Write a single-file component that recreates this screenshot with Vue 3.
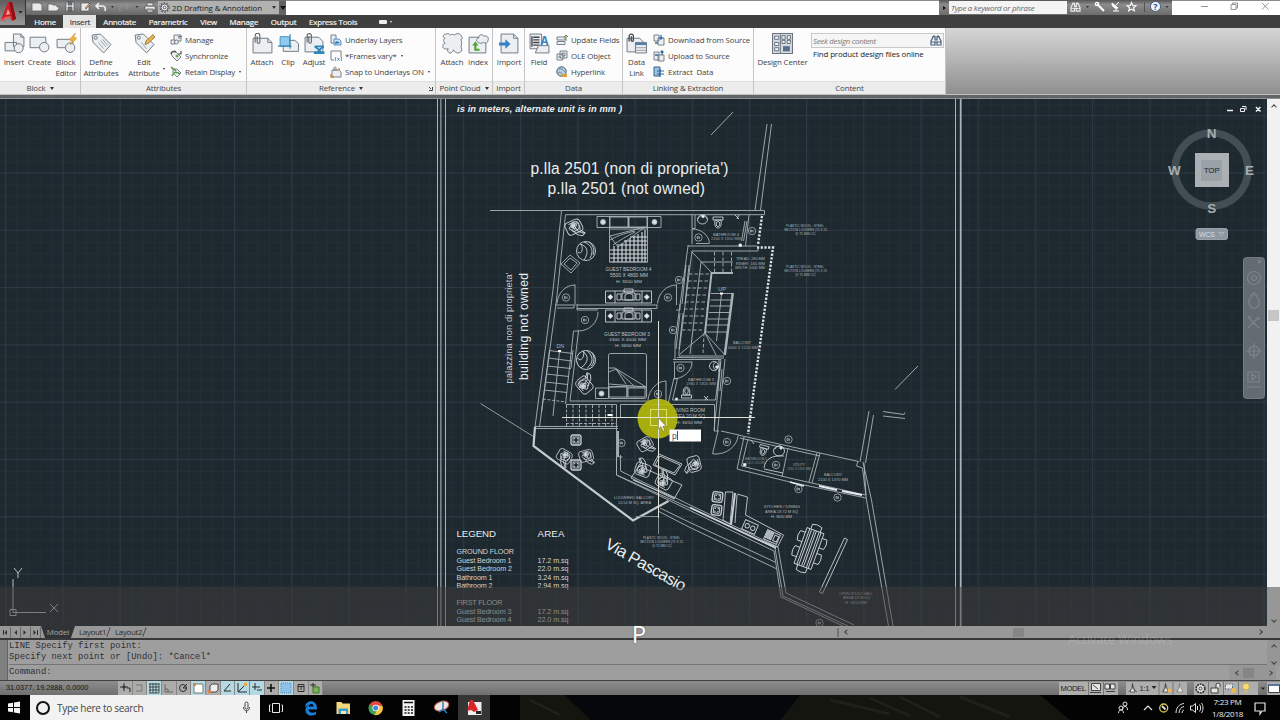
<template>
  <div class="window">
    <svg class="symbols" width="0" height="0">
      <symbol id="i-insert" viewBox="0 0 20 20"><path d="M9 1h7l3 3v9H9z M1 9h11v8H1z" class="pg" /><circle cx="14" cy="14.5" r="4.3" class="pg" /><path d="M16 1v3h3" class="ln" /></symbol>
      <symbol id="i-create" viewBox="0 0 20 20"><path d="M1 4h15v10H1z" class="pg" /><circle cx="14.500" cy="13.500" r="4.500" class="pg" /></symbol>
      <symbol id="i-beditor" viewBox="0 0 20 20"><path d="M1 6h15v8H1z" class="pg" /><circle cx="13.500" cy="14" r="4.500" class="pg" /><path d="M18.500 0l-6 6.500 3 1-2 4 6.300-6.500-3-1z" fill="#f2b03a" stroke="#c98518" stroke-width=".5" /></symbol>
      <symbol id="i-tag" viewBox="0 0 20 20"><path d="M1 2l8-1 10 10-7 8L2 9z" class="pg" /><circle cx="4.500" cy="4.500" r="1.500" class="ln" /><path d="M7 9l5 6M9 7l5 6M11 6l5 6" class="ln thin" /></symbol>
      <symbol id="i-tagedit" viewBox="0 0 20 20"><path d="M1 2l8-1 10 10-7 8L2 9z" class="pg" /><circle cx="4.500" cy="4.500" r="1.500" class="ln" /><path d="M10.500 11l1-3.500L18 1.500l2 2.300-6.300 6z" fill="#e9b351" stroke="#8a6521" stroke-width=".7" /><path d="M7 9l5 6" class="ln thin" /></symbol>
      <symbol id="i-attach" viewBox="0 0 20 20"><path d="M1 5h14l4 4v10H1z" class="pg" /><path d="M15 5v4h4" class="ln" /><path d="M3 9V2.500a2.200 2.200 0 0 1 4.500 0v6a1.300 1.300 0 0 1-2.600 0V3" fill="none" stroke="#5a6067" /></symbol>
      <symbol id="i-clip" viewBox="0 0 20 20"><path d="M5 7h11l3.500 3v7.500H5z" class="pg" /><path d="M2 3.500h9v9H2z" fill="#8fcbf0" stroke="#3c87b5" stroke-width=".8" /><path d="M0 12.500h13M11.500 1v14" stroke="#3c87b5" stroke-width="1.100" /></symbol>
      <symbol id="i-adjust" viewBox="0 0 20 20"><path d="M1 4h13l4 4v10H1z" class="pg" /><path d="M3 9V2.500a2 2 0 0 1 4 0v6a1.200 1.200 0 0 1-2.400 0V3" fill="none" stroke="#5a6067" /><path d="M10 12h9v2l-3 2v1.500h3.500V20h-10v-2.500H13V16l-3-2z" fill="#2f86b8" /><path d="M12.500 13.500h4l-2 1.500z" fill="#d9eef8" /></symbol>
      <symbol id="i-cloud" viewBox="0 0 20 20"><path d="M3 5C0 4 1 1 4 1c2-1 3 0 4 1 1-1 3-1 4 0 1-2 6-2 6.500 1C20 5 19 6 18 6c1 3 1 5 0 7 2 3 0 6-3 6-2 0-3-1-4-3-1 3-4 4-5 2-1-1-1-2 0-3-4 1-6-1-5-3 0-2 1-2 2-2-2-2-2-4 0-5z" class="pg" /></symbol>
      <symbol id="i-index" viewBox="0 0 20 20"><path d="M1 4h10v4h6v11H1z" class="pg" /><path d="M10 9c-3-1-2-4 0-4 0-4 4-4 5-2 4-1 5 2 4 4 0 3-3 3-4 2-2 1-4 1-5 0z" class="pg" /><path d="M4 12l3-4 3 4H8v3h3v2H6v-5z" fill="#4aa52e" /></symbol>
      <symbol id="i-import" viewBox="0 0 20 20"><path d="M2 1h12l4 4v14H2z" class="pg" /><path d="M14 1v4h4" class="ln" /><path d="M0 9h6V6l5 4.500L6 15v-3H0z" fill="#3381c7" /></symbol>
      <symbol id="i-field" viewBox="0 0 20 20"><path d="M1 1h11v14H1z" class="pg" /><path d="M4 4h6M4 6.500h6M4 9h6M4 11.500h6M2.800 3v10" stroke="#3e444b" stroke-width="1.300" /><path d="M6 19l3-7h10v7z" class="pg" /><text x="11" y="11.500" font-size="11" font-weight="bold" fill="#3781c4">A</text></symbol>
      <symbol id="i-datalink" viewBox="0 0 20 20"><path d="M1 5h12l4 4v9H1z" class="pg" /><path d="M3 8V3a2 2 0 0 1 4 0v4a1 1 0 0 1-2 0V3" fill="none" stroke="#3d4147" stroke-width="1.200" /><path d="M9 9h10.500v10H9z" class="pg" /><path d="M9 10.500h10.500" stroke="#4f7fae" stroke-width="2" /><path d="M9 14h10M9 16.500h10" class="ln thin" /></symbol>
      <symbol id="i-center" viewBox="0 0 20 20"><path d="M.5.500h19v19H.5z" fill="#d7dbdf" stroke="#6b747d" /><path d="M2.500 3h4v3h-4zM2.500 9h4v3h-4zM2.500 14h4v3h-4z M9.500 2.500h3v3.500h-3zM14.500 2.500h3v3.500h-3zM9.500 7h3v3h-3zM14.500 7h3v3h-3z" fill="#eef3f7" stroke="#566372" stroke-width=".8" /><path d="M10.500 12.500h6.500v5h-6.500z" fill="#59708b" /><path d="M8 1v18" class="ln" /></symbol>

      <symbol id="s-manage" viewBox="0 0 12 12"><path d="M4 1h7v6H4z" class="pg" /><path d="M8 2.500h4M8 4h3" class="ln" /><path d="M1 6h4v4H1z" class="pg" /><circle cx="6.500" cy="8" r="2" class="pg" /></symbol>
      <symbol id="s-sync" viewBox="0 0 12 12"><path d="M1 2l5 0 5 5-4 4-5-5z" class="pg" /><path d="M1 4a3 3 0 0 1 5-2M11 1v3H8" fill="none" stroke="#4a5158" stroke-width="1.200" /><circle cx="7" cy="6" r="1.500" fill="#6aa84f" /></symbol>
      <symbol id="s-retain" viewBox="0 0 12 12"><path d="M3 3l4 0 4 4-4 4-4-4z" class="pg" /><path d="M1 1l5 4M2 10c2-5 5-4 8-2" fill="none" stroke="#5a9642" stroke-width="1.500" /></symbol>
      <symbol id="s-layers" viewBox="0 0 12 12"><path d="M1 1h5v8H1z" class="pg" /><path d="M4 5h5l2 2v4H4z" fill="#cfe5f5" stroke="#2f7cb3" stroke-width=".8" /><path d="M5 10c0-4 3-3 5-1z" fill="#2f7cb3" /></symbol>
      <symbol id="s-frames" viewBox="0 0 12 12"><path d="M1 1h10v6M1 1v9h3" class="ln" /><path d="M6 7c-1 1-1 3 0 4M11 7c1 1 1 3 0 4M7.500 8l2 2.500M9.500 8l-2 2.500" fill="none" stroke="#3381b7" stroke-width=".9" /></symbol>
      <symbol id="s-snap" viewBox="0 0 12 12"><path d="M2 4h7l2 2v5H2z" class="pg" /><path d="M4 5V2a1 1 0 0 1 2 0v3" class="ln" /><path d="M1 8v3h3M9 2v3" fill="none" stroke="#d38125" stroke-width="1.300" /></symbol>
      <symbol id="s-update" viewBox="0 0 12 12"><path d="M1 3h8v3H1zM1 7.500h8v3H1z" class="pg" /><path d="M8 3l2-2 2 2M10 1v6" fill="none" stroke="#6b7f3c" /></symbol>
      <symbol id="s-ole" viewBox="0 0 12 12"><path d="M1 4h6v6H1zM4 1h7v7H4z" class="pg" /><path d="M6 3h3v3H6zM2 7h3" class="ln" /></symbol>
      <symbol id="s-link" viewBox="0 0 12 12"><circle cx="5.500" cy="5.500" r="4.700" fill="#b5cfe0" stroke="#46586a" /><path d="M3 3c3-1 4 1 6 3M2 7c2-2 4 1 5 2" class="ln" /><path d="M6 8h5v3H6z" fill="#d9a13b" /></symbol>
      <symbol id="s-down" viewBox="0 0 12 12"><path d="M1 1h5v6H1zM5 4h6v7H5z" class="pg" /><path d="M8 1v4M6.500 3.500L8 5l1.500-1.500M2 9h3" fill="none" stroke="#2d6da8" stroke-width="1.300" /></symbol>
      <symbol id="s-up" viewBox="0 0 12 12"><path d="M1 2h5v8H1zM5 5h6v6H5z" class="pg" /><path d="M9 5V1M7.500 2.500L9 1l1.500 1.500M2 5h3" fill="none" stroke="#2d6da8" stroke-width="1.300" /></symbol>
      <symbol id="s-extract" viewBox="0 0 12 12"><path d="M1 1h6v9H1z" fill="#9fc1de" stroke="#35658f" /><path d="M4 5h7M4 8h7M7 3v8" stroke="#2d6da8" stroke-width="1.200" /></symbol>

      <symbol id="binoc" viewBox="0 0 12 11"><path d="M1 10V6l2-4h2v3h2V2h2l2 4v4H7V7H5v3z" fill="none" stroke="currentColor" stroke-width="1.200" /><path d="M1 7h4M7 7h4M3 2V1h2v1M7 2V1h2v1" fill="none" stroke="currentColor" /></symbol>

      <!-- plan blocks -->
      <symbol id="person" viewBox="-12 -12 24 24" overflow="visible"><path d="M-7-7h10c3 0 4 2 4 5v5c0 2-1 3-3 3h-9c-3 0-4-1-4-3v-8z M-5-5h8c2 1 2 6 1 9 M-6-1l5-4 6 3-2 5-6 1z M-4 1l3 7 4 3 3-1-5-5-1-5 M3 4l4 6 M-4-2l3 4 4-4M0-6l2 4" /><circle r="1.900" cx="-1" cy="-2" fill="#cdd5d8" /></symbol>
      <symbol id="round" viewBox="-12 -12 24 24" overflow="visible"><circle r="9.500" /><path d="M-6-7c8 2 9 9 4 16M-2-9c8 3 10 9 6 16M-8 1c3 3 6-2 3-8M3-9c4 3 6 8 4 13" /></symbol>
      <symbol id="wc" viewBox="-6 -6 12 12" overflow="visible"><path d="M-5-5h10v3h-10z M-3-2c-1 6 1 8 3 8s4-2 3-8z" /><ellipse cy="2" rx="1.800" ry="2.600" /></symbol>
      <symbol id="stool" viewBox="-6 -6 12 12" overflow="visible"><rect x="-5" y="-5" width="10" height="10" rx="2" stroke-width="1.300" /><rect x="-3" y="-3" width="6" height="6" /><path d="M-1.500-1.500h.1M1.500-1.500h.1M-1.500 1.500h.1M1.500 1.500h.1" stroke-width="1.300" stroke-linecap="round" /></symbol>
      <symbol id="desk" viewBox="0 0 48 15" overflow="visible"><path d="M.5 1h46v12h-46zM10 1v12M37 1v12M17 3h13v7H17zM19-1h9v3h-9zM12 4h4v6h-4zM31 4h4v6h-4z M20 5c3-2 5-2 8 0v5h-8z" /><path d="M5.300 4.500l2.500 2.500-2.500 2.500-2.500-2.500zM41.800 4.500l2.500 2.500-2.500 2.500-2.500-2.500z" fill="#e8ecee" /></symbol>
    </svg>

    <header class="titlebar">
      <div class="quick">
        <svg width="132" height="15" viewBox="0 0 132 15">
          <g fill="#e7e9eb" stroke="#4e5358" stroke-width=".7">
            <path d="M6 3h8l2 2v6H6z" /><path d="M22 4h4l1 1h4v2h3l-3 4H22z" /><path d="M40 2h8v9H40z" /><path d="M42 2h4v3h-4zM42 7h4v4h-4z" fill="#6d747b" />
            <path d="M55 3h8v8h-8z" /><path d="M59 8l5-5 1 1-5 5z" fill="#eeb95c" />
            <path d="M119 6h10v4H119zM121 3h6v3h-6zM121 9h6v3h-6z" />
          </g>
          <path d="M73 3l-3 3 3 3M70 6h6c3 0 4 2 3 5" fill="none" stroke="#f2f2f2" stroke-width="1.600" />
          <path d="M100 3l3 3-3 3M103 6h-6c-3 0-4 2-3 5" fill="none" stroke="#8e8e8e" stroke-width="1.500" />
          <path d="M85 6h3l-1.500 2zM109.500 6h3l-1.500 2z" fill="#333" />
        </svg>
        <div class="workspace">
          <svg width="11" height="11" viewBox="-6 -6 12 12"><circle r="3.800" fill="#eee" stroke="#4c5157" stroke-width="1" /><circle r="1.500" fill="none" stroke="#4c5157" /><circle r="5" fill="none" stroke="#4c5157" stroke-width="1.200" stroke-dasharray="1.600 1.540" /></svg>
          <span>2D Drafting &amp; Annotation</span>
          <i class="caret"></i>
        </div>
        <div class="more"><i class="caret wide"></i></div>
      </div>
      <div class="doc-title"></div>
      <div class="info">
        <i class="arrow-r"></i>
        <div class="keyword">Type a keyword or phrase</div>
        <svg width="104" height="15" viewBox="1068 0 104 15">
          <svg x="1071" y="2" width="11" height="10" color="#f0f0f0"><use href="#binoc" /></svg>
          <path d="M1087 6h3l-1.500 2zM1166.500 6h3l-1.500 2z" fill="#333" />
          <path d="M1098 4l7 7" stroke="#fff" stroke-width="2" /><circle cx="1098" cy="4" r="1.700" fill="none" stroke="#fff" stroke-width="1.200" />
          <path d="M1113 3c0 4 3 6 6 5zM1117 5l3-3M1114 11h6M1117 8v3" fill="#fff" stroke="#fff" />
          <path d="M1132.500 2.500l1.300 3 3.200.200-2.500 2 .900 3.100-2.900-1.700-2.800 1.700.900-3.100-2.500-2 3.200-.200z" fill="none" stroke="#fff" stroke-width="1.100" />
          <circle cx="1156.500" cy="6.500" r="5" fill="#f2f6fb" stroke="#28466e" stroke-width=".8" /><text x="1154.300" y="9.700" font-size="9" font-weight="bold" fill="#1d4f98">?</text>
          <path d="M1145.500 2v10" stroke="#555" />
        </svg>
      </div>
      <div class="controls">
        <svg width="108" height="15" viewBox="1172 0 108 15" fill="none" stroke="#8a8a8a" stroke-width=".9"><path d="M1201 6.500h7M1231 4.500h5v5h-5zM1232.500 4.500v-1.500h5v5h-1.500M1262 3l6.500 6.500M1268.500 3l-6.500 6.500" /></svg>
      </div>
    </header>

    <nav class="tabs">
      <span v-for="t in tabs" :key="t" class="tab" :class="{ active: t === 'Insert' }">{{ t }}</span>
      <i class="ribbon-toggle"></i><i class="caret light"></i>
    </nav>

    <div class="app-button">
      <svg width="25" height="26" viewBox="0 0 25 26"><path d="M1 20L8 2h4l4 17-4 2-2-4-5 1-1 3z" fill="#cf2026" /><path d="M9 2h3l4 17-3 1z" fill="#8f0f14" /><path d="M8 9l2 5-4 1z" fill="#f0aaa6" /><path d="M1 20l4-3 6-1-1 2-5 1-1 2z" fill="#ef5a56" /><path d="M18.500 11h4l-2 2.500z" fill="#222" /></svg>
    </div>

    <section class="ribbon">
      <div v-for="p in panels" :key="p.title" class="panel" :style="{ width: p.width + 'px' }">
        <div class="panel-body" :style="{ paddingLeft: p.pad + 'px' }">
          <div v-for="b in p.big" :key="b.icon" class="big" :style="{ width: b.w + 'px' }">
            <svg class="icon-big"><use :href="'#i-' + b.icon" /></svg>
            <span v-for="line in b.lines" :key="line">{{ line }}</span>
            <i v-if="b.drop" class="caret corner"></i>
          </div>
          <div v-if="p.rows" class="rows">
            <div v-for="r in p.rows" :key="r.text" class="row">
              <svg class="icon-small"><use :href="'#s-' + r.icon" /></svg>
              <span>{{ r.text }}</span>
              <i v-if="r.drop" class="caret tiny"></i>
            </div>
          </div>
          <div v-if="p.search" class="content-search">
            <div class="seek"><em>Seek design content</em><svg width="12" height="11" color="#47607d"><use href="#binoc" /></svg></div>
            <div class="find">Find product design files online</div>
          </div>
        </div>
        <div class="panel-title"><span>{{ p.title }}</span><i v-if="p.drop" class="caret"></i><svg v-if="p.launcher" class="launcher" width="5" height="5" viewBox="0 0 5 5"><path d="M1 1l2 2M4.500 1v3.500H1" fill="none" stroke="#444" /></svg></div>
      </div>
    </section>
    <div class="splitter"></div>

    <main class="workspace-area">
      <svg class="canvas" width="1267" height="527" viewBox="0 99 1267 527">
        <defs>
          <pattern id="minor" width="11.460" height="11.460" patternUnits="userSpaceOnUse" x="5.200" y="1.100"><path d="M.5 0v12M0 .5h12" stroke="#222e35" fill="none" /></pattern>
          <pattern id="major" width="57.200" height="57.300" patternUnits="userSpaceOnUse" x="5.200" y="0.500"><path d="M.5 0v58M0 .5h58" stroke="#2a3942" fill="none" /></pattern>
        </defs>
        <rect y="99" width="1267" height="527" fill="#1e282f" />
        <rect y="99" width="1267" height="527" fill="url(#minor)" />
        <rect y="99" width="1267" height="527" fill="url(#major)" />

        <!-- sheet border -->
        <path d="M437.500 99v527M445.500 99v527M955.500 99v527" stroke="#aab3bb" />
        <path d="M440.800 99v527" stroke="#77828b" stroke-width="1.600" />
        <path d="M960.700 99v527" stroke="#aab3c0" stroke-width="1.800" />

        <!-- walls -->
        <g class="wall">
          <path d="M490 210.500H764.500V214.700H565.500" />
          <path d="M561.500 211L553 290 535 427M565.500 214.700L556.500 300 539.500 427" />
          <path d="M711 135l22-23M767 124l-12 86M771.500 124l-11 86" />
          <path d="M895 389.500l23-23.500M869 411l-9 51M873.500 415l-8 48M883 411.500l21 3 1-2M883 416l22 2.500" />
          <path d="M692 215v13.500h3V215M692 229v15M692 229c9 0 17 6 17.500 14.500M696 243.500h13" />
          <path d="M688 246h69M692 251h66v-4M688 245v1L675 342v18M692 251l-13 101v4h45M686 265l-4 39M689 265l-4 39M680 313l-4 36M683 313l-4 36" />
          <path d="M749 215l-3.500 31M747 221l-3.500 20M745 221l-3.500 20" />
          <path d="M575 284.500v21M575 285c-10 0-17 8-18 18.500M676.500 284.500V305M676.500 285c-10 0-18 8-19 18.500M555 305h19v3h-17" />
          <path d="M577 305h80M577 308.500h80v-4M577 304v6h21M598 312c0 10-8 19-20 19M680 304v6h-4" />
          <path d="M573.500 331l-8 73M578.500 331l-8.500 70H650M573.500 331h5M566 404.500h50.500v24M620.500 418v-13.500H714.500V431M666 381v23M666 381c-9 0-17 9-18 19" />
          <path d="M673 359.500h48l-7 71M725 359l-7.500 72M677 357.500l47 .500M673 362h19M692 362c0 9-8 16-18 17M674.500 362.500v16h3l-5 21.500h43l5-38M674 378l-6 26M722 369l-2 22M719.500 369l-2 22" />
          <path d="M718 431l-5.500 23M713 454c14 1 24-8 25-18M714 431h5M721 431l18 4" />
          <path d="M535 426.500h83M535 428.500h83M616.500 429v46M616.500 457v18L690 508 775 548 783 596 848 626M620.500 455v16L690 505 778 547 786 593 854 625M618.500 457h4M616.500 475L690 510.500 774 551 781 597 843 626" />
          <path d="M660 508L690 522.500 775 562M658 511L690 527.500 777 569" />
          <path d="M738 435l82 18 38.500 8.500M740 438l80 18M744 437l-7 32 53 13 76 16M748 439l-6.500 27 48 12 76 17M820 453l-8 30M817 453l-8 29M788 448l-6 29M858 461l-1.500 5 6 2 4 32 22 126M863 462l8.500 38 21.500 126M864 463l2 32" />
          <path d="M480.500 403.500l54.500 34" stroke="#9ba5aa" />
        </g>
        <path d="M535 427l-1.500 19L633 520.500l35.500-19.500" fill="none" stroke="#c3cacd" stroke-width="2.200" />
        <path d="M690 507.500L776 548" stroke="#d0d6d9" stroke-width="1.600" />
        <path d="M762 216l-4 29M757 247.500h16L748 434" fill="none" stroke="#dde2e4" stroke-width="2.400" stroke-dasharray="2.200 1.500" />
        <path d="M790 482l14 4M819 486l18 4M842 491l20 4" stroke="#e8ebed" stroke-width="1.800" />

        <!-- stairs -->
        <g class="wall">
          <path d="M549.500 350l-8 62M573 350l-2 18M549 350.500l24 3M548 358l24 3M547 366l24 2.500M546 374l23 2.500M545 382l23 2.500M544 390l23 2.500M559.500 351l-6.500 65" />
          <path d="M543 399l23 3M566.500 405v22M573 405v22M579.500 405v22M586 405v22M592.500 405v22M599 405v22M605.500 405v22M612 405v22M566 423.500h50" stroke-dasharray="3 1.500" />
          <path d="M692 252l19.500 20.500M701 262h32M701 262l-11 92M705 333l-25 21M705 333l20 22M705 333l11 22M732 293l-8 62M711 293.500h22M710.500 300h21M710 306h21M709 312.500h21M708 319h21M707 325h21M706 332h21M721.500 294l-5 47" />
          <path d="M689 274h22M688 281h22M687 288h22M686 295h23M685 302h23M684 309h23M684 316h22M683 323h22M682 330h22M714.500 252v21M723 252v21M731.500 252v21M704 333l-1 22" stroke-dasharray="3.500 2" />
          <path d="M733 273H711.500l-6.500 60M733 293l-8 62" stroke-width="2" />
          <path d="M607.500 415h5M558 351h3M720 293.500h3" stroke="#fff" stroke-width="2.200" />
        </g>

        <!-- beds -->
        <g class="wall">
          <path d="M597 216.500h64v11h-64zM609.500 216v46M647.500 216v46M628.500 217v10M610 217h18v10h-18zM629 217h18v10h-18z" />
          <path d="M609.500 262h38M614 246v16M618 246v16M622 243v19M626 240v22M630 238v24M634 236v26M638 234v28M642 232v30M645 230v32M610 250h37M617 245h30M624 241h23M630 237h17M610 254h37M610 258h37" stroke-width="1.100" stroke="#d9dee0" />
          <path d="M610 236l35-9-27 20-8-11 M610 240c9-5 16-7 25-9M613 245c7-5 14-9 22-13" />
          <path d="M610 229h37" />
          <rect x="608.500" y="353.500" width="38" height="45" rx="2" /><path d="M609 387h37M627 387v11M609 387l18-1v11h-18zM628 388h17v9h-17zM595.500 388h13v10.500h-13zM609 368l6 0 31 19-37-3M609 372l7-3 10 15M616 369l18 17" />
          <circle cx="603" cy="222" r="2.500" fill="#d9dee0" /><circle cx="654.500" cy="222" r="2.500" fill="#d9dee0" /><circle cx="601.500" cy="393.500" r="2.500" fill="#d9dee0" />
          <path d="M561 264l9-9 10 8-9 10zM564 264l6-6 7 5-6 7z" />
        </g>

        <!-- blocks -->
        <g class="wall bright">
          <use v-for="(b, i) in blocks" :key="i" :href="'#' + b[0]" :x="b[5] ?? -12" :y="b[5] ?? -12" :width="b[6] ?? 24" :height="b[6] ?? 24" :transform="`translate(${b[1]} ${b[2]}) rotate(${b[3]}) scale(${b[4]})`" />
          <use href="#desk" x="605" y="290" width="48" height="15" /><use href="#desk" x="605" y="309" width="48" height="15" />
        </g>
        <g class="wall bright">
          <ellipse cx="702.500" cy="219.500" rx="5" ry="4.500" /><path d="M698 219c2-5 7-5 9 0" /><circle cx="703" cy="216.500" r="1.300" fill="#fff" />
          <circle cx="714" cy="366" r="4.500" /><path d="M719 360v12M716 362c-3 1-4 6 0 8" /><circle cx="717" cy="367" r="1.300" fill="#fff" />
          <ellipse cx="779" cy="451" rx="5.500" ry="5" /><path d="M775 449c2-4 7-4 9 0" /><circle cx="781" cy="448" r="1.200" fill="#fff" />
          <path d="M735 215l4 4M739 215l-2 4M704 396l4 4M708 396l-3 4M751 440l3 4" />
          <path d="M764 468c1-9 8-13 20-12M764 469l19 4" />
          <path d="M739 244h2.500v2.500H739zM675.500 398h2v2h-2zM743.500 463.500h2.500v2.500h-2.500z" fill="#fff" />
          <path d="M631 478l8-12 43 19-8 14zM633 480l42 18M659 454l23 10-7 11-22-10zM660 456l20 9-6 8-19-8z" />
          <path d="M618 431v26" stroke-width="1.600" />
          <path d="M636 516.500h22.500V534" class="dim" />
          <path d="M725.500 492h7.500l-3 32-7-4zM737 494l10.500 3-2 18 38 20-6 12-20-8M737 495l-2 28" /><path d="M735 493l-4 32" stroke-width="2" />
          <g transform="translate(750 527) rotate(24)"><rect x="-7" y="-5" width="14" height="10" /><circle cx="-3" r="2.200" /><circle cx="3" r="2.200" /></g>
          <g transform="translate(772 537) rotate(24)"><rect x="-7" y="-5" width="14" height="10" /><rect x="-6" y="-4" width="6" height="7" fill="#aab2b7" /><rect x="2" y="-3" width="4" height="6" /></g>
          <g transform="translate(809 548.500) rotate(20)"><rect x="-9" y="-19" width="18" height="38" /><path d="M-6-19v38M-4-19v38M-1-19v38M1-19v38M4-19v38M6-19v38" /><path d="M-5-19v-5q5-2 10 0v5M-5 19v5q5 2 10 0v-5M-9-14h-5q-2 5 0 10h5M-9 2h-5q-2 5 0 10h5M9-14h5q2 5 0 10h-5M9 2h5q2 5 0 10h-5" /></g>
          <path d="M844.500 538l3 1.500-25 54-3-1.500z" />
        </g>
        <g fill="none" stroke="#a9b3b8" stroke-width=".8"><g v-for="(t, i) in tags" :key="i"><circle :cx="t[0]" :cy="t[1]" r="3.700" /><path :d="`M${t[0] - 1.5} ${t[1] - 1}h1.300v2h-1.300zM${t[0] + 1} ${t[1] - 1}v2.300`" /></g></g>

        <!-- annotation -->
        <g class="note">
          <text v-for="(n, i) in notes" :key="i" :x="n[0]" :y="n[1]" :font-size="noteSize(n)" :textLength="n[2]" lengthAdjust="spacingAndGlyphs" :opacity="n[4]">{{ n[3] }}</text>
        </g>
        <g class="lettering">
          <text x="457" y="111.500" font-size="9.300" font-weight="bold" font-style="italic" textLength="165">is in meters, alternate unit is in mm )</text>
          <text x="530.500" y="174" font-size="15.600" textLength="198">p.lla 2501 (non di proprieta')</text>
          <text x="547.500" y="194" font-size="15.600" textLength="157.500">p.lla 2501 (not owned)</text>
          <text transform="translate(511.500 383.500) rotate(-90)" font-size="9.300" textLength="111" fill="#c9cfd2">palazzina non di proprieta'</text>
          <text transform="translate(528 380) rotate(-90)" font-size="12.100" textLength="107">building not owned</text>
          <text transform="translate(604 547.500) rotate(29.500)" font-size="16.500" textLength="90">Via Pascasio</text>
          <text x="456.500" y="537" font-size="9.700" textLength="39.500">LEGEND</text><text x="537.500" y="537" font-size="9.700" textLength="27">AREA</text>
          <text v-for="l in legend" :key="l[0] + '-' + l[1]" :x="l[0]" :y="l[1]" :textLength="l[2]" font-size="7.200" fill="#d0d6d8">{{ l[3] }}</text>
        </g>

        <!-- ucs icon -->
        <path d="M13 579v33.500M13 612.500h33M10 609.500h6v6h-6zM50 604l8 8M58 604l-8 8M14 568l4 5 4-5M18 573v5" fill="none" stroke="#b9bfc2" />

        <!-- view cube -->
        <g class="cube">
          <circle cx="1211.500" cy="169.500" r="36.500" fill="none" stroke="#434d54" stroke-width="7.500" />
          <rect x="1195" y="153" width="34" height="34" fill="#abb0b4" /><rect x="1201" y="160" width="21" height="21" fill="#9ba2a7" />
          <text x="1204" y="173" font-size="7.600" textLength="15.500" fill="#303940" stroke="#303940" stroke-width=".2">TOP</text>
          <g font-size="13.500" fill="#a7adb0" font-weight="bold" text-anchor="middle"><text x="1211.700" y="137.500">N</text><text x="1211.700" y="213">S</text><text x="1174.300" y="175">W</text><text x="1249.500" y="175">E</text></g>
          <rect x="1196" y="228.500" width="31.500" height="11" rx="2" fill="#8d98a3" stroke="#a9b3bb" stroke-width=".8" /><text x="1199" y="236.500" font-size="7" textLength="16" fill="#d7dde0">WCS</text><path d="M1219 232.500h5l-2.500 3.500z" fill="none" stroke="#b7c0c7" stroke-width=".7" />
        </g>

        <!-- navigation bar -->
        <rect x="1243.500" y="257.500" width="21" height="141" rx="3" fill="#656c71" stroke="#767d82" />
        <g fill="none" stroke="#7d8489" stroke-width="1.200">
          <path d="M1258 260l3 3M1261 260l-3 3" /><circle cx="1254" cy="278" r="6.500" /><circle cx="1254" cy="278" r="2.500" />
          <path d="M1249 304v-5l2-1v-3h2v-2h2v2h2v3l2 2v5l-3 3h-4zM1248 317l11 11M1259 317l-11 11M1248 317h3M1259 317v3" /><circle cx="1254" cy="351" r="5" /><path d="M1254 343v16M1246 351h16" />
          <path d="M1248 372h11v10h-11zM1252 374l4 3-4 3zM1247 387h14" />
        </g>
        <g stroke="#eef0f1" fill="none" stroke-width="1.500"><path d="M1227 110.500h6M1256 107l4.500 4.500M1260.500 107l-4.500 4.500" /><path d="M1240.500 108.500h4v3h-4zM1242 106.500h4v3.500" stroke-width="1" /></g>

        <!-- crosshair -->
        <circle cx="657.500" cy="418.500" r="20" fill="#b3b80c" fill-opacity=".93" />
        <path d="M562 417.500h193M658.500 321v197" stroke="#dfe3da" />
        <rect x="650.500" y="409.500" width="16" height="16" fill="none" stroke="#dce06a" />
        <rect x="669.500" y="429.500" width="31.500" height="12" fill="#fff" /><text x="672" y="438.500" font-size="8.500" fill="#38516c">p</text><path d="M677.500 431v9" stroke="#555" />
        <path d="M658.500 418v11l2.500-2.300 2 4.500 1.800-.8-2-4.200h3.500z" fill="#fff" stroke="#6d6a2a" stroke-width=".6" />
      </svg>
      <div class="vscroll"><i class="chev up"></i><div class="vthumb"></div><i class="chev down"></i></div>
    </main>

    <div class="layout-bar">
      <div class="pager"><svg width="41" height="11" viewBox="0 0 41 11"><path d="M10.500 0v11M20.500 0v11M30.500 0v11M40.500 0v11" stroke="#999" /><path d="M7 3v5L4.500 5.500zM17 3v5l-2.500-2.500zM23.500 3v5l2.500-2.500zM33.500 3v5l2.500-2.500z" fill="#222" /><path d="M3.500 3v5M37.500 3v5" stroke="#222" /></svg></div>
      <span class="model">Model</span><span class="layout">Layout1</span><span class="layout">Layout2</span>
      <div class="hscroll"><i class="grip"></i><i class="chev left"></i><i class="hthumb"></i><i class="chev right"></i></div>
    </div>

    <section class="command">
      <div class="handle"></div>
      <div class="cmd-text">
        <div class="history"><p>LINE Specify first point:</p><p>Specify next point or [Undo]: *Cancel*</p></div>
        <div class="prompt"><span>Command:</span><div class="cmd-scroll"><i class="chev left"></i><i class="sq"></i><i class="chev right"></i></div></div>
      </div>
      <div class="cmd-side"><i class="chev up"></i><i class="chev down"></i></div>
    </section>

    <footer class="status">
      <span class="coords">31.0377, 19.2888, 0.0000</span>
      <div class="toggles">
        <span v-for="(t, i) in toggles" :key="i" :class="{ on: t[0] }"><svg width="12" height="12" viewBox="0 0 12 12" v-html="t[1]"></svg></span>
      </div>
      <div class="status-right">
        <svg width="432" height="14" viewBox="848 681 432 14">
          <path d="M1059 682h59v13h-59zM1126 682h61v13h-61zM1194 682h64v13h-64zM1267 682h13v13h-13z" fill="#aeaeac" />
          <path d="M1088.500 682v13M1103.500 682v13M1159 682v13M1173 682v13M1208.500 682v13M1223.500 682v13M1238.500 682v13" stroke="#777" />
          <text x="1060.500" y="690.500" font-size="7.600" textLength="25.500" fill="#222">MODEL</text>
          <text x="1139.500" y="690.500" font-size="7.600" textLength="10" fill="#222">1:1</text>
          <path d="M1151.500 686h5l-2.500 3zM1261 687.500h4l-2 2.500z" fill="#222" />
          <g fill="#e6e6e3" stroke="#333" stroke-width=".9"><path d="M1091.500 683.500h9v7h-9zM1093 685l5 4M1090 692.500h11" /><path d="M1105 684h4.500v5h-4.500zM1110.500 684h4.500v5h-4.500zM1106 691.500h9" />
            <path d="M1132.500 683v5l-4 4M1132.500 688l4.500 4M1130 692l2.500-8 2.500 8z" stroke-width=".7" /><path d="M1165.500 683v5l-3 4M1163 692l2.500-8 2.500 8z" stroke-width=".7" /><path d="M1179.500 683v5l-3 4M1177 692l2.500-8 3.500 8z" stroke="#777" stroke-width=".7" />
            <circle cx="1200.500" cy="688.500" r="4.300" stroke-width="1.600" stroke-dasharray="2 .700" /><circle cx="1200.500" cy="688.500" r="1.500" /><path d="M1211 688h7v5h-7zM1216 688v-3a2 2 0 0 1 4 0v2" /><path d="M1225.500 684h7v5h-7z" stroke="#446b90" stroke-dasharray="2 1" /><path d="M1268.500 684.500h11v8h-11z" fill="#fff" /><path d="M1268.500 685h11" stroke="#5a779b" stroke-width="2" />
          </g>
          <g fill="#efb94b"><circle cx="1169.500" cy="690.500" r="2" /><circle cx="1233.500" cy="690.500" r="2.500" /><circle cx="1246" cy="686.500" r="3.300" fill="#f9dd72" stroke="#c09535" stroke-width=".6" /><path d="M1244.500 690h3v3h-3z" fill="#c7b98c" /></g>
        </svg>
      </div>
    </footer>

    <div class="taskbar">
      <svg class="start" width="30" height="25" viewBox="0 0 30 25"><path d="M8 8.500l5-.8V12H8zM14 7.500l6-1V12h-6zM8 13h5v4.300l-5-.8zM14 13h6v5.500l-6-1z" fill="#f4f4f4" /></svg>
      <div class="search">
        <i class="cortana"></i><span>Type here to search</span>
        <svg width="9" height="13" viewBox="0 0 9 13" fill="none" stroke="#444"><rect x="3" y="1" width="3" height="7" rx="1.500" /><path d="M1.500 6c0 5 6 5 6 0M4.500 9.500V12" /></svg>
      </div>
      <svg class="apps" width="240" height="25" viewBox="260 695 240 25">
        <rect x="458" y="695" width="32" height="25" fill="#353535" />
        <path d="M272.500 703.500h7v9h-7zM270.500 705h-1v6.500h1M281.500 705h1v6.500h-1" fill="none" stroke="#e8e8e8" />
        <path d="M305 708c0-9 12-9 12 .500v1h-8.500c.2 3.500 4.500 4 7.500 2.200v2.600c-5 2.500-10.500 1-10.500-4.300 0-2 1-4 3-5-2 .5-3 1.500-3.500 3zM308.600 706.500h5c0-3.500-4.700-3-5 0z" fill="#1781dc" />
        <path d="M336.500 702h5l1 1.500h7.500v10.500h-13.500z" fill="#f5d77b" /><path d="M338.500 708.500h9.500v5.500h-9.500z" fill="#3c9ad4" /><path d="M341 711h5v3h-5z" fill="#f5e5a6" />
        <circle cx="375.700" cy="708" r="7" fill="#e14a3c" /><path d="M369.500 704.500a7 7 0 0 0 5 10.400l3.500-6z" fill="#36a355" /><path d="M382.500 706a7 7 0 0 1-8 9l4-7.500-2-2z" fill="#f6c83b" /><circle cx="375.700" cy="708" r="3.300" fill="#fff" /><circle cx="375.700" cy="708" r="2.500" fill="#4285d8" />
        <path d="M402.500 700h12v16h-12z" fill="#f5f5f5" /><path d="M404 702.500h9M404.500 707h2M407.700 707h2M411 707h2M404.500 710h2M407.700 710h2M411 710h2M404.500 713h2M407.700 713h2M411 713h2" stroke="#151515" stroke-width="1.700" />
        <ellipse cx="441.500" cy="706" rx="7.500" ry="4.500" transform="rotate(-18 441.500 706)" fill="#efe5e2" stroke="#b36156" /><path d="M443 702v7l-4 3M443 709l4 4" stroke="#2c80bd" stroke-width="1.500" fill="none" />
        <path d="M468 702h13.500v13H468z" fill="#efefef" /><path d="M467 711l3-11h3l5 10-4 2-3-2z" fill="#d8262a" /><path d="M476 711h5v3h-5z" fill="#222" />
      </svg>
      <svg class="scenery" width="610" height="25" viewBox="500 695 610 25" preserveAspectRatio="none"><path d="M520 695h45l26 25h-71zM800 695h240l30 25H780z" fill="#14150f" /><path d="M565 695h235l-20 25H591z" fill="#04080d" /><path d="M830 700l60 14M900 697l40 20M960 697l50 20M530 700l30 15M870 698l40 18" stroke="#1f2018" stroke-width="3" /></svg>
      <svg class="tray" width="100" height="25" viewBox="1110 695 100 25" fill="none" stroke="#e4e4e4">
        <circle cx="1125" cy="704" r="2" /><circle cx="1121" cy="708" r="2" /><path d="M1118.500 713c0-4 5-4 5 0M1122.500 710c0-5 5-5 5 0" /><path d="M1144 710l4-4 4 4" stroke-width="1.200" />
        <circle cx="1163.700" cy="708" r="4" stroke="#dcc75f" stroke-width="1.300" /><path d="M1162 706l3.500 3.500" stroke-width="1.800" /><path d="M1176 713c0-5 3-9 8-9.500M1179 713c0-3 2-6 5-6.500M1182 713c0-1.500 1-3 2-3" /><path d="M1190.500 706h2l3-2.500v9l-3-2.500h-2zM1197.500 706v4M1199.500 704.500c1.500 2 1.500 5 0 7M1201.500 703c2 3 2 7 0 10" />
      </svg>
      <div class="clock"><span>7:23 PM</span><span>1/8/2018</span></div>
      <svg class="notify" width="35" height="25" viewBox="1245 695 35 25"><path d="M1255 703h10v8h-3l-2 3v-3h-5z" fill="none" stroke="#e4e4e4" stroke-width="1.200" /></svg>
    </div>

    <div class="keystroke-shade"></div>
    <div class="keystroke">P</div>
    <div class="activate">Activate Windows</div>
  </div>
</template>

<script setup>
const tabs = ['Home', 'Insert', 'Annotate', 'Parametric', 'View', 'Manage', 'Output', 'Express Tools']

const panels = [
  {
    title: 'Block', width: 81, pad: 1, drop: true,
    big: [
      { icon: 'insert', w: 26, lines: ['Insert'] },
      { icon: 'create', w: 25, lines: ['Create'] },
      { icon: 'beditor', w: 28, lines: ['Block', 'Editor'] },
    ],
  },
  {
    title: 'Attributes', width: 166, pad: 0,
    big: [
      { icon: 'tag', w: 40, lines: ['Define', 'Attributes'] },
      { icon: 'tagedit', w: 46, lines: ['Edit', 'Attribute'], drop: true },
    ],
    rows: [
      { icon: 'manage', text: 'Manage' },
      { icon: 'sync', text: 'Synchronize' },
      { icon: 'retain', text: 'Retain Display', drop: true },
    ],
  },
  {
    title: 'Reference', width: 189, pad: 2, drop: true, launcher: true,
    big: [
      { icon: 'attach', w: 26, lines: ['Attach'] },
      { icon: 'clip', w: 26, lines: ['Clip'] },
      { icon: 'adjust', w: 26, lines: ['Adjust'] },
    ],
    rows: [
      { icon: 'layers', text: 'Underlay Layers' },
      { icon: 'frames', text: '*Frames vary*', drop: true },
      { icon: 'snap', text: 'Snap to Underlays ON', drop: true },
    ],
  },
  {
    title: 'Point Cloud', width: 57, pad: 3, drop: true,
    big: [
      { icon: 'cloud', w: 26, lines: ['Attach'] },
      { icon: 'index', w: 26, lines: ['Index'] },
    ],
  },
  { title: 'Import', width: 32, pad: 0, big: [{ icon: 'import', w: 32, lines: ['Import'] }] },
  {
    title: 'Data', width: 98, pad: 0,
    big: [{ icon: 'field', w: 28, lines: ['Field'] }],
    rows: [
      { icon: 'update', text: 'Update Fields' },
      { icon: 'ole', text: 'OLE Object' },
      { icon: 'link', text: 'Hyperlink' },
    ],
  },
  {
    title: 'Linking & Extraction', width: 131, pad: 0,
    big: [{ icon: 'datalink', w: 27, lines: ['Data', 'Link'] }],
    rows: [
      { icon: 'down', text: 'Download from Source' },
      { icon: 'up', text: 'Upload to Source' },
      { icon: 'extract', text: 'Extract  Data' },
    ],
  },
  { title: 'Content', width: 192, pad: 0, search: true, big: [{ icon: 'center', w: 57, lines: ['Design Center'] }] },
]

// symbol, x, y, rotation, scale, box offset, box size
const blocks = [
  ['person', 575, 227, -25, 1],
  ['round', 586, 251, 0, 1],
  ['round', 586, 360, 20, 1],
  ['person', 584, 384, -130, 1],
  ['person', 565, 457, 30, 0.9],
  ['person', 587, 456, -15, 0.85],
  ['person', 646, 444, -30, 0.9],
  ['person', 694, 465, 75, 0.95],
  ['person', 642, 469, -160, 0.95],
  ['person', 663, 481, -150, 0.95],
  ['stool', 576, 440, 0, 1, -6, 12],
  ['stool', 576, 465, 0, 1, -6, 12],
  ['stool', 717.5, 497, 8, 1, -6, 12],
  ['stool', 716.5, 510, 8, 1, -6, 12],
  ['wc', 718, 222, 0, 1, -6, 12],
  ['wc', 686.5, 393, 180, 1, -6, 12],
  ['wc', 763.5, 450, 14, 0.9, -6, 12],
]

const tags = [
  [566, 297.5], [668, 297.5], [585, 320], [698.5, 237.5], [752, 231], [679, 280], [673, 330],
  [680.5, 368], [727, 381], [658, 394], [727, 442], [621.5, 443], [788.5, 439.5], [776, 465],
  [798.5, 489], [837.5, 497.5], [819.5, 623],
]

// x, baseline, length, text, opacity
const notes = [
  [605.5, 271.3, 46, 'GUEST BEDROOM 4', 0.9], [610, 276.8, 38, '5500 X 4800 MM', 0.9], [616, 282.5, 26, 'H: 3650 MM', 0.9],
  [604, 335.7, 46, 'GUEST BEDROOM 3', 0.9], [609, 341.3, 37, '4300 X 4000 MM', 0.9], [615, 347, 26, 'H: 3650 MM', 0.9],
  [713, 235.6, 26, 'BATHROOM 4', 0.8], [711, 240, 30, '2100 X 1900 MM', 0.7],
  [736, 260, 29, 'TREAD: 280 MM', 0.8], [736, 264.7, 29, 'RISER: 165 MM', 0.8], [735, 269.3, 30, 'WIDTH: 1000 MM', 0.8],
  [786, 227, 38, 'PLASTIC WOOD - STEEL', 0.8], [784, 230.8, 43, 'SECTION LOUVERS (75 X 25', 0.8], [795, 234.8, 21, '@ 75 MM C/C', 0.8],
  [786, 267.8, 38, 'PLASTIC WOOD - STEEL', 0.8], [784, 271.8, 43, 'SECTION LOUVERS (75 X 25', 0.8], [795, 275.8, 21, '@ 75 MM C/C', 0.8],
  [718, 291, 8, 'UP', 0.8], [556.5, 348, 7.5, 'DN', 0.8],
  [733, 344, 18, 'BALCONY', 0.8], [728, 348.5, 30, '6600 X 1220 MM', 0.7],
  [688, 380.5, 26, 'BATHROOM 3', 0.8], [686, 385.3, 30, '1980 X 1820 MM', 0.7],
  [673, 412, 32, 'LIVING ROOM', 0.9], [672, 418, 33, 'AREA 20 M SQ', 0.8], [676, 423.8, 26, 'H: 3650 MM', 0.9],
  [614, 499, 40, 'LOUVERED BALCONY', 0.8], [618, 503.5, 33, '10.54 M SQ. AREA', 0.8],
  [643, 539, 37, 'PLASTIC WOOD - STEEL', 0.8], [640, 543, 43, 'SECTION LOUVERS (75 X 25', 0.8], [652, 547.3, 20, '@ 75 MM C/C', 0.8],
  [745, 460, 22, 'BATHROOM 5', 0.6], [745, 463.8, 20, '2100 X 1350 MM', 0.5],
  [793, 465.5, 12, 'UTILITY', 0.75], [787, 469.5, 24, '1260 X 1350 MM', 0.6],
  [824, 476, 18, 'BALCONY', 0.8], [818, 480.8, 30, '2100 X 1370 MM', 0.8],
  [764, 508, 36, 'KITCHEN / DINING', 0.8], [765, 512.8, 33, 'AREA 19.72 M SQ', 0.8], [771, 517.5, 21, 'H: 3650 MM', 0.8],
  [839, 594.6, 34, 'OPEN STUDY HALL', 0.75], [843, 599.3, 27, 'AREA 19 M SQ', 0.75], [845, 604, 22, 'H: 3650 MM', 0.75],
]

// long notes squeezed into a short length get smaller letters
const noteSize = (n) => Math.max(3, Math.min(5, n[2] / n[3].length / 0.6))

const legend = [
  [456.5, 554, 57.5, 'GROUND FLOOR'],
  [456.5, 562.7, 55, 'Guest Bedroom 1'], [537.5, 562.7, 31, '17.2 m.sq'],
  [456.5, 571.3, 55.5, 'Guest Bedroom 2'], [537.5, 571.3, 31, '22.0 m.sq'],
  [456.5, 579.7, 36, 'Bathroom 1'], [537.5, 579.7, 31, '3.24 m.sq'],
  [456.5, 588, 36, 'Bathroom 2'], [537.5, 588, 31, '2.94 m.sq'],
  [456.5, 605, 46, 'FIRST FLOOR'],
  [456.5, 613.5, 55, 'Guest Bedroom 3'], [537.5, 613.5, 31, '17.2 m.sq'],
  [456.5, 622, 55, 'Guest Bedroom 4'], [537.5, 622, 31, '22.0 m.sq'],
  [456.5, 630.5, 36, 'Bathroom 3'], [537.5, 630.5, 31, '3.24 m.sq'],
]

const ink = 'fill="none" stroke="#2d2d2d"'
const toggles = [
  [0, `<path ${ink} d="M5 1v8M1 5h8M8 6h3v4"/><circle cx="5" cy="5" r="1.6" fill="#333"/>`],
  [0, `<path fill="none" stroke="#777" d="M3 3h6v6H3"/>`],
  [1, `<path ${ink} stroke-width=".8" d="M1 2h10M1 5h10M1 8h10M1 11h10M2 1v10M5 1v10M8 1v10M11 1v10"/>`],
  [0, `<path fill="none" stroke="#666" d="M2 2v8h8M2 7h3v3"/>`],
  [0, `<circle cx="6" cy="6" r="3.5" ${ink}/><path ${ink} d="M6 6l4-4M6 6h4"/>`],
  [1, `<path d="M2 2h9v9H2z" fill="#fff" stroke="#777"/><path d="M1 1h3v3H1z" fill="#d98244"/>`],
  [0, `<path d="M3 4l2-2h6v6l-2 2H3z" fill="#eee" stroke="#444"/><path d="M1 8h3v3H1z" fill="#d98244"/>`],
  [1, `<path ${ink} d="M9 2L3 9h7"/>`],
  [1, `<path ${ink} d="M2 1v9h9M2 10l7-7"/><path d="M8 1h3v3H8z" fill="#e9a93c"/>`],
  [1, `<path ${ink} d="M1 5h8M4 1v7M6 8h5"/>`],
  [0, `<path stroke="#111" stroke-width="1.6" d="M2 6h8M6 2v8"/>`],
  [1, `<path d="M1 1h10v10H1z" fill="#8fc2ea" stroke="#4a86bf" stroke-dasharray="1 1"/>`],
  [0, `<path ${ink} d="M3 2.500h6v7H3zM3 4.500h6M6 5v3"/>`],
  [0, `<path d="M4 5h6v6H4z" fill="#7cb35a" stroke="#3c7426"/><path ${ink} d="M1 3h6M4 1v4"/>`],
]
</script>

<style>
body {
  background: #000;
  overflow: hidden;
}
</style>

<style scoped>
.window {
  position: relative;
  display: flex;
  flex-direction: column;
  width: 1280px;
  height: 720px;
  overflow: hidden;
  font-family: "Open Sans", "Noto Sans", sans-serif;
  font-size: 7.9px;
  letter-spacing: -0.13px;
  color: #444;
  background: #1f2930;
}
.symbols { position: absolute; }
.pg { fill: #eceff1; stroke: #6d7780; stroke-width: 0.9; }
.ln { fill: none; stroke: #6d7780; stroke-width: 0.9; }
.thin { stroke-width: 0.6; }

.caret {
  display: inline-block;
  border: 2.5px solid transparent;
  border-top: 3px solid #333;
  border-bottom: 0;
}
.caret.tiny { border-width: 1.5px; border-top-width: 2px; margin-left: 4px; }
.caret.light { border-width: 1.5px; border-top: 2px solid #eee; margin-left: 3px; }
.caret.wide { border-width: 3px; border-top: 4px solid #111; }

.titlebar {
  display: flex;
  height: 15px;
  box-shadow: inset 0 1px #8c8c8c;
  background: #fff;
}
.quick {
  display: flex;
  align-items: center;
  width: 286px;
  background: linear-gradient(#6a6a6a, #8d8d8d 30%, #666);
}
.quick > svg { flex: none; margin-left: 26px; }
.workspace {
  display: flex;
  align-items: center;
  gap: 2px;
  width: 121px;
  height: 13px;
  box-sizing: border-box;
  padding: 0 3px 0 1px;
  background: #b1b1b1;
  color: #222;
  white-space: nowrap;
}
.workspace .caret { margin-left: auto; }
.more { width: 7px; height: 13px; display: flex; align-items: center; justify-content: center; background: #626262; }
.doc-title { flex: 1; }
.info {
  display: flex;
  align-items: center;
  width: 233px;
  background: linear-gradient(#555, #8b8b8b 30%, #6c6c6c);
}
.arrow-r { flex: none; margin: 0 3px 0 4px; border: 2.5px solid transparent; border-left: 3px solid #111; border-right: 0; }
.keyword {
  width: 118px;
  height: 13px;
  line-height: 15px;
  padding-left: 2px;
  box-sizing: border-box;
  background: #f4f4f4;
  color: #666;
  font-style: italic;
  letter-spacing: -0.25px;
}
.controls { width: 108px; }
.controls svg, .info svg { display: block; flex: none; }

.tabs {
  display: flex;
  align-items: center;
  height: 13px;
  padding-left: 28px;
  background: #404040;
  color: #f4f4f4;
}
.tab { height: 13px; line-height: 14px; padding: 0 6.3px; -webkit-text-stroke: 0.2px; }
.tab.active { margin: 0 0.5px 0 1px; background: #e4e4e4; color: #444; }
.ribbon-toggle { width: 8px; height: 4px; margin-left: 15px; background: #eee; border-radius: 1px; }

.app-button {
  position: absolute;
  left: 0;
  top: 0;
  width: 25px;
  height: 25px;
  background: linear-gradient(#5e5e5e, #9a9a9a);
  border-right: 1px solid #333;
}

.ribbon {
  display: flex;
  height: 66px;
  background: linear-gradient(#d6d6d6, #8f8f8f);
}
.panel {
  display: flex;
  flex-direction: column;
  box-sizing: border-box;
  border-right: 1px solid #c4c4c4;
  background: #fcfcfc;
}
.panel-body { display: flex; flex: 1; }
.big {
  position: relative;
  flex: none;
  display: flex;
  flex-direction: column;
  align-items: center;
  padding-top: 5px;
  line-height: 10.7px;
  white-space: nowrap;
}
.icon-big { width: 21px; height: 21px; margin-bottom: 3px; flex: none; }
.corner { position: absolute; right: 2px; top: 40px; border-width: 1.5px; border-top-width: 2px; }
.rows { margin-left: 3px; padding-top: 4px; }
.row { display: flex; align-items: center; height: 16px; white-space: pre; }
.icon-small { width: 12px; height: 12px; margin-right: 3px; flex: none; }
.panel-title {
  position: relative;
  display: flex;
  align-items: center;
  justify-content: center;
  gap: 4px;
  height: 12px;
  background: #ececec;
  border-top: 1px solid #dedede;
  white-space: nowrap;
}
.launcher { position: absolute; right: 2px; top: 4px; }
.content-search { padding-top: 5px; width: 133px; }
.seek {
  display: flex;
  justify-content: space-between;
  align-items: center;
  height: 13px;
  border: 1px solid #c9c9c9;
  background: #f5f5f5;
  padding: 0 1px;
  color: #777;
  letter-spacing: -0.3px;
}
.find { margin: 1px 0 0 2px; color: #222; }
.splitter { height: 5px; box-sizing: border-box; background: #626466; border-top: 1px solid #c2c2c2; border-bottom: 1px solid #8a9094; }

.workspace-area { display: flex; height: 527px; }
.canvas { display: block; font-family: "Liberation Sans", Arial, sans-serif; letter-spacing: 0; }
.wall { fill: none; stroke: #a9b3b7; stroke-width: 0.9; }
.bright { stroke: #c8cfd2; }
.dim { stroke: #8b959a; }
.note { fill: #ccd3d6; }
.lettering { fill: #e9edee; }
.vscroll {
  position: relative;
  display: flex;
  flex-direction: column;
  justify-content: space-between;
  align-items: center;
  flex: 1;
  padding: 6px 0 4px;
  box-sizing: border-box;
  background: #f1f1f1;
}
.vthumb { width: 11px; height: 11px; margin-bottom: 96px; background: #c6c6c6; }
.chev { width: 3px; height: 3px; border: solid #444; border-width: 1.2px 1.2px 0 0; flex: none; }
.chev.up { transform: rotate(-45deg); }
.chev.down { transform: rotate(135deg); }
.chev.left { transform: rotate(-135deg); }
.chev.right { transform: rotate(45deg); }

.layout-bar {
  display: flex;
  align-items: center;
  height: 12px;
  background: #f2f2f2;
  color: #111;
}
.pager { width: 41px; height: 11px; }
.pager svg { display: block; }
.model { width: 34px; height: 12px; line-height: 12px; text-align: center; background: #1f2930; color: #fff; clip-path: polygon(0 0, 100% 0, 88% 100%, 12% 100%); }
.layout { width: 31px; padding: 0 1px 0 4px; line-height: 12px; position: relative; letter-spacing: -0.3px; }
.layout::after { content: ""; display: block; position: absolute; right: 2px; top: 1px; height: 10px; border-right: 1px solid #555; transform: rotate(20deg); }
.hscroll { display: flex; align-items: center; width: 434px; margin-left: auto; }
.grip { width: 2px; height: 9px; background: #aaa; }
.hscroll .grip { margin-left: -9px; }
.hscroll .left { margin-left: 6px; }
.hthumb { width: 11px; height: 9px; margin-left: 164px; background: #cfcfcf; }
.hscroll .right { margin-left: auto; margin-right: 18px; }

.command {
  display: flex;
  height: 43px;
  box-sizing: border-box;
  border-top: 2px solid #333;
  border-bottom: 1px solid #444;
  background: #fff;
}
.handle { width: 8px; background: #c2c2c2; border-right: 1px solid #888; box-sizing: border-box; }
.cmd-text { flex: 1; display: flex; flex-direction: column; font: 8.87px "Liberation Mono", "Courier New", monospace; letter-spacing: 0; color: #222; padding-left: 1px; }
.history { height: 27px; border-bottom: 1px solid #aaa; box-sizing: border-box; padding-top: 1px; }
.history p { margin: 0; line-height: 11px; }
.prompt { display: flex; justify-content: space-between; line-height: 15px; }
.cmd-scroll { display: flex; align-items: center; width: 47px; background: #eee; }
.cmd-scroll .left { margin-left: 7px; }
.sq { width: 11px; height: 10px; background: #ccc; margin: 0 14px 0 3px; }
.cmd-side { width: 13px; display: flex; flex-direction: column; gap: 11px; align-items: center; height: 26px; padding-top: 5px; box-sizing: border-box; background: #eee; margin-left: -9px; }

.status {
  display: flex;
  height: 14px;
  background: linear-gradient(#8d8d8d, #6f6f6f);
  color: #151515;
}
.coords { width: 118px; padding-left: 6px; box-sizing: border-box; font: 7.4px/14px "Liberation Sans", sans-serif; letter-spacing: -0.08px; white-space: nowrap; }
.toggles { display: flex; }
.toggles span { width: 14.66px; height: 14px; display: flex; align-items: center; justify-content: center; box-sizing: border-box; background: #acacaa; border-right: 1px solid #868686; }
.toggles .on { background: #b4d9e2; }
.status-right { margin-left: auto; }
.status-right svg { display: block; font-family: "Liberation Sans", sans-serif; letter-spacing: 0; }

.taskbar { display: flex; height: 25px; background: #030303; color: #eee; }
.taskbar svg { flex: none; }
.search { display: flex; align-items: center; width: 230px; box-sizing: border-box; padding: 0 9px 0 6px; background: #f2f2f2; color: #444; font-size: 10px; letter-spacing: -0.3px; }
.cortana { width: 10px; height: 10px; border: 2px solid #111; border-radius: 50%; margin-right: 7px; }
.search svg { margin-left: auto; }
.clock { width: 35px; display: flex; flex-direction: column; align-items: center; justify-content: center; line-height: 12px; font-size: 8px; letter-spacing: -0.3px; white-space: nowrap; }

.keystroke-shade { position: absolute; left: 0; top: 587px; width: 1280px; height: 94px; background: rgba(64, 62, 62, 0.5); }
.keystroke { position: absolute; left: 630px; top: 620px; width: 18px; text-align: center; font: 24px/28px "Open Sans", sans-serif; color: #fff; text-shadow: 0 0 2px #555; }
.activate { position: absolute; left: 1068px; top: 631px; font-size: 13px; line-height: 16px; color: rgba(210, 210, 210, 0.28); height: 13px; overflow: hidden; }
</style>
